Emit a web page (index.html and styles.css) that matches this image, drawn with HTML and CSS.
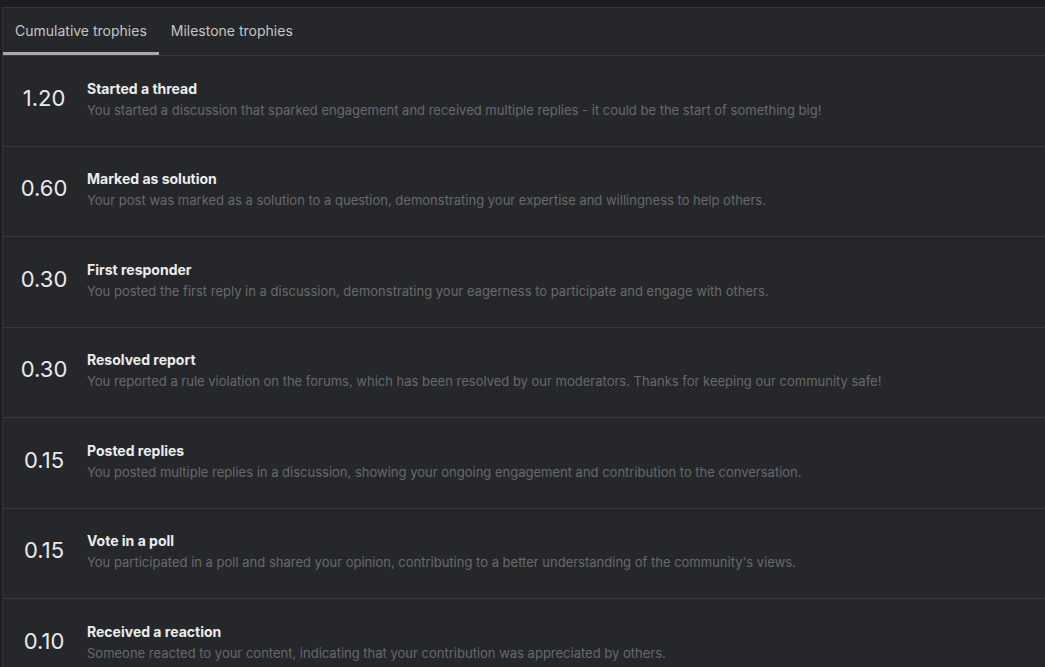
FILE: index.html
```html
<!DOCTYPE html>
<html lang="en">
<head>
    <meta charset="UTF-8">
    <meta name="viewport" content="width=device-width, initial-scale=1.0">
    <title>Trophies</title>
    <link rel="stylesheet" href="styles.css">
</head>
<body>
    <div class="panel">
        <div class="tabs">
            <a class="tab active">Cumulative trophies</a>
            <a class="tab">Milestone trophies</a>
        </div>
        <ul class="trophies">
            <li class="trophy">
                <div class="points">1.20</div>
                <div class="info">
                    <h3>Started a thread</h3>
                    <p>You started a discussion that sparked engagement and received multiple replies - it could be the start of something big!</p>
                </div>
            </li>
            <li class="trophy">
                <div class="points">0.60</div>
                <div class="info">
                    <h3>Marked as solution</h3>
                    <p>Your post was marked as a solution to a question, demonstrating your expertise and willingness to help others.</p>
                </div>
            </li>
            <li class="trophy">
                <div class="points">0.30</div>
                <div class="info">
                    <h3>First responder</h3>
                    <p>You posted the first reply in a discussion, demonstrating your eagerness to participate and engage with others.</p>
                </div>
            </li>
            <li class="trophy">
                <div class="points">0.30</div>
                <div class="info">
                    <h3>Resolved report</h3>
                    <p>You reported a rule violation on the forums, which has been resolved by our moderators. Thanks for keeping our community safe!</p>
                </div>
            </li>
            <li class="trophy">
                <div class="points">0.15</div>
                <div class="info">
                    <h3>Posted replies</h3>
                    <p>You posted multiple replies in a discussion, showing your ongoing engagement and contribution to the conversation.</p>
                </div>
            </li>
            <li class="trophy">
                <div class="points">0.15</div>
                <div class="info">
                    <h3>Vote in a poll</h3>
                    <p>You participated in a poll and shared your opinion, contributing to a better understanding of the community's views.</p>
                </div>
            </li>
            <li class="trophy">
                <div class="points">0.10</div>
                <div class="info">
                    <h3>Received a reaction</h3>
                    <p>Someone reacted to your content, indicating that your contribution was appreciated by others.</p>
                </div>
            </li>
        </ul>
    </div>
</body>
</html>
```

FILE: styles.css
```css
body {
    margin: 0;
    padding: 7px 0 0 2px;
    background: #1c1d1f;
    font-family: Inter, "Noto Sans", sans-serif;
    overflow: hidden;
}

.panel {
    background: #26272a;
    border-top: 1px solid #333437;
    border-left: 1px solid #333437;
}

.tabs {
    display: flex;
    border-bottom: 1px solid #38393c;
}
.tab {
    display: block;
    padding: 14px 12px 13px;
    font-size: 14px;
    line-height: 17px;
    color: #c4c5c7;
    border-bottom: 3px solid transparent;
    cursor: pointer;
}
.tab.active {
    border-bottom-color: #a9aaac;
}

.trophies {
    list-style: none;
    margin: 0;
    padding: 0;
}
.trophy {
    display: flex;
    align-items: center;
    height: 89.5px;
    border-bottom: 1px solid #38393c;
}
.points {
    width: 82px;
    flex: none;
    text-align: center;
    font-size: 22px;
    color: #e9eaeb;
    padding-bottom: 6px;
}
.info {
    padding-left: 2px;
    padding-bottom: 4px;
}
.info h3 {
    margin: 0 0 5px;
    font-size: 14px;
    line-height: 17px;
    font-weight: 700;
    color: #ececed;
}
.info p {
    margin: 0;
    font-size: 13px;
    line-height: 16px;
    color: #68696c;
}
```
